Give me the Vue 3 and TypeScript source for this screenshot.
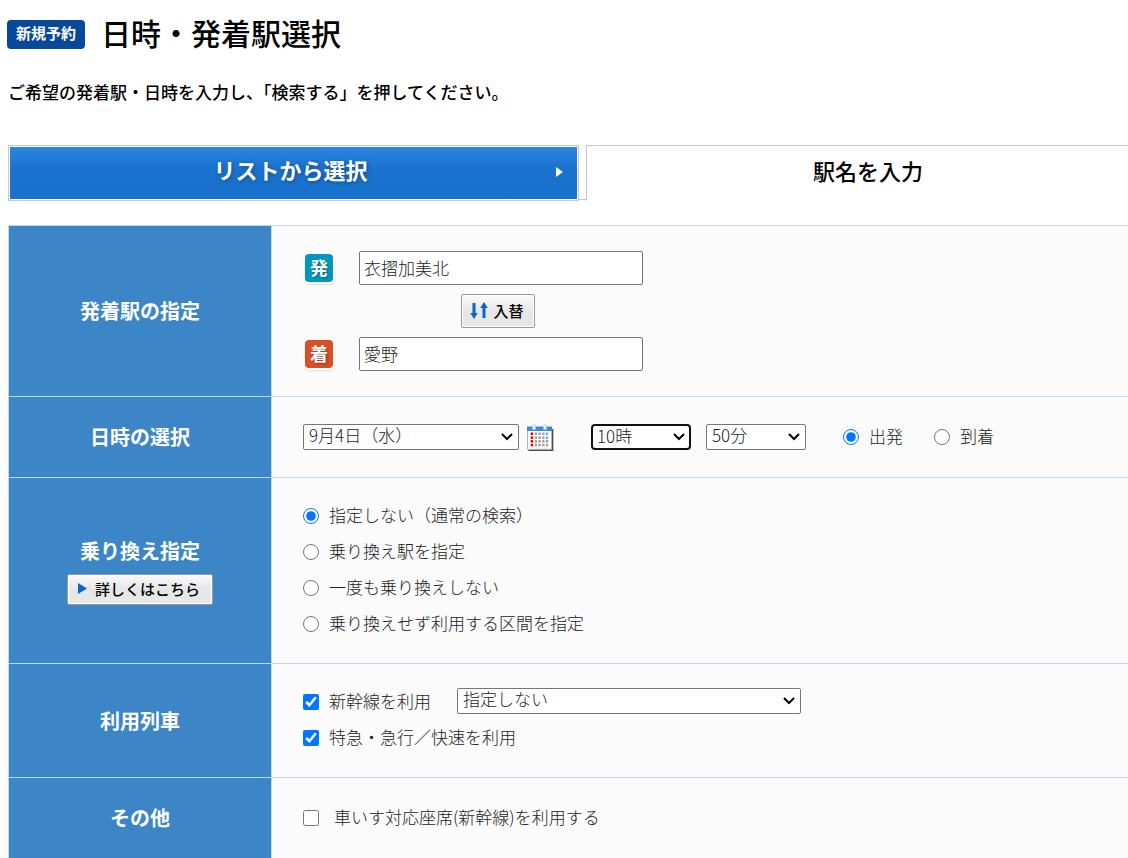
<script setup lang="ts">
import { ref } from 'vue'

interface Choice {
  value: string
  label: string
}

const mode = ref<'list' | 'name'>('list')
const departure = ref('衣摺加美北')
const arrival = ref('愛野')
const date = ref('9月4日（水）')
const hour = ref('10時')
const minute = ref('50分')
const timeBase = ref('departure')
const transfer = ref('none')
const useShinkansen = ref(true)
const useExpress = ref(true)
const shinkansenType = ref('指定しない')
const wheelchair = ref(false)

const dates: string[] = ['9月4日（水）']
const hours: string[] = ['10時']
const minutes: string[] = ['50分']
const shinkansenTypes: string[] = ['指定しない']

const timeBases: Choice[] = [
  { value: 'departure', label: '出発' },
  { value: 'arrival', label: '到着' },
]

const transfers: Choice[] = [
  { value: 'none', label: '指定しない（通常の検索）' },
  { value: 'station', label: '乗り換え駅を指定' },
  { value: 'direct', label: '一度も乗り換えしない' },
  { value: 'section', label: '乗り換えせず利用する区間を指定' },
]

const calendarColumns = [3.7, 7.7, 11.4, 15.1, 18.8]
const calendarRows = [8.5, 12.4, 16.1, 19.8]

function swapStations(): void {
  const previous = departure.value
  departure.value = arrival.value
  arrival.value = previous
}
</script>

<template>
  <main class="page">
    <header class="heading">
      <span class="badge">新規予約</span>
      <h1>日時・発着駅選択</h1>
    </header>
    <p class="lead">ご希望の発着駅・日時を入力し、「検索する」を押してください。</p>

    <form class="content" @submit.prevent>
      <nav class="tabs">
        <div class="tab-cell">
          <button type="button" class="tab tab-active" @click="mode = 'list'">
            リストから選択
            <svg class="tab-arrow" width="7" height="10" viewBox="0 0 7 10" aria-hidden="true">
              <path d="M0 0L7 5L0 10Z" fill="#fff" />
            </svg>
          </button>
        </div>
        <div class="tab-cell tab-cell-second">
          <button type="button" class="tab tab-plain" @click="mode = 'name'">駅名を入力</button>
        </div>
      </nav>

      <div class="sheet">
        <section class="row">
          <h2 class="row-title">発着駅の指定</h2>
          <div class="row-body stations">
            <div class="station">
              <label class="mark mark-dep" for="departure">発</label>
              <input id="departure" v-model="departure" type="text" class="station-input" />
            </div>
            <button type="button" class="small-button swap" @click="swapStations">
              <svg width="18" height="17" viewBox="0 0 18 17" aria-hidden="true">
                <path d="M2.500 1H5.500V11H7.800L4 17L0.200 11H2.500Z" fill="#0a66cc" />
                <path d="M14 0L17.800 6H15.500V16H12.500V6H10.200Z" fill="#0a66cc" />
              </svg>
              入替
            </button>
            <div class="station">
              <label class="mark mark-arr" for="arrival">着</label>
              <input id="arrival" v-model="arrival" type="text" class="station-input" />
            </div>
          </div>
        </section>

        <section class="row">
          <h2 class="row-title">日時の選択</h2>
          <div class="row-body datetime">
            <select v-model="date" class="select date-select" aria-label="日付">
              <option v-for="d in dates" :key="d">{{ d }}</option>
            </select>
            <button type="button" class="calendar" aria-label="カレンダー">
              <svg width="27" height="27" viewBox="0 0 27 27" aria-hidden="true">
                <path d="M1.500 5H26.300V27H1.500Z" fill="#4a4a4a" />
                <path d="M0.500 3.500H24.500V25.300H0.500Z" fill="#fff" stroke="#b5b5b5" />
                <path d="M0 2.500H25V7H0Z" fill="#3f88d4" />
                <path
                  d="M5.500 5.500V1.500Q7 -0.500 8.500 1.500V5.500ZM16.500 5.500V1.500Q18 -0.500 19.500 1.500V5.500Z"
                  fill="#e2f2ff"
                  stroke="#9bcbee"
                  stroke-width="0.700"
                />
                <template v-for="(y, r) in calendarRows" :key="r">
                  <rect
                    v-for="(x, c) in calendarColumns"
                    :key="c"
                    :x="x"
                    :y="y"
                    width="2.400"
                    height="2.500"
                    :fill="c === 0 ? '#d40000' : '#a0a0a0'"
                  />
                </template>
              </svg>
            </button>
            <select v-model="hour" class="select time-select current" aria-label="時">
              <option v-for="h in hours" :key="h">{{ h }}</option>
            </select>
            <select v-model="minute" class="select time-select" aria-label="分">
              <option v-for="m in minutes" :key="m">{{ m }}</option>
            </select>
            <div class="bases">
              <label v-for="b in timeBases" :key="b.value" class="choice">
                <input v-model="timeBase" type="radio" name="base" :value="b.value" />{{ b.label }}
              </label>
            </div>
          </div>
        </section>

        <section class="row">
          <div class="row-title">
            <h2>乗り換え指定</h2>
            <button type="button" class="small-button detail">
              <svg width="9" height="11" viewBox="0 0 9 11" aria-hidden="true">
                <path d="M0 0L9 5.500L0 11Z" fill="#0a66cc" />
              </svg>
              詳しくはこちら
            </button>
          </div>
          <div class="row-body transfer">
            <label v-for="t in transfers" :key="t.value" class="choice">
              <input v-model="transfer" type="radio" name="transfer" :value="t.value" />{{ t.label }}
            </label>
          </div>
        </section>

        <section class="row">
          <h2 class="row-title">利用列車</h2>
          <div class="row-body trains">
            <div class="train-line">
              <label class="choice"><input v-model="useShinkansen" type="checkbox" />新幹線を利用</label>
              <select v-model="shinkansenType" class="select train-select" aria-label="新幹線の種別">
                <option v-for="s in shinkansenTypes" :key="s">{{ s }}</option>
              </select>
            </div>
            <label class="choice"><input v-model="useExpress" type="checkbox" />特急・急行／快速を利用</label>
          </div>
        </section>

        <section class="row">
          <h2 class="row-title">その他</h2>
          <div class="row-body other">
            <label class="choice choice-wide">
              <input v-model="wheelchair" type="checkbox" />車いす対応座席(新幹線)を利用する
            </label>
          </div>
        </section>
      </div>
    </form>
  </main>
</template>

<style>
body {
  margin: 0;
  background: #fff;
}
</style>

<style scoped>
* {
  box-sizing: border-box;
}

.page {
  padding: 14px 0 0 8px;
  overflow: hidden;
  font-family: "Noto Sans CJK JP", "Noto Sans", sans-serif;
  font-size: 17px;
  font-weight: 300;
  color: #222;
}

button,
input,
select {
  margin: 0;
  font: inherit;
  color: inherit;
}

h1,
h2,
p {
  margin: 0;
}

.heading {
  display: flex;
  align-items: center;
  gap: 16px;
  height: 40px;
  margin-left: -1px;
}

.badge {
  padding: 0 9px 3px;
  border-radius: 4px;
  background: #084898;
  color: #fff;
  font-size: 15px;
  font-weight: 700;
  line-height: 26px;
}

h1 {
  padding-bottom: 4px;
  color: #000;
  font-size: 30px;
  font-weight: 500;
  line-height: 40px;
}

.lead {
  margin-top: 26px;
  color: #000;
  font-weight: 500;
  line-height: 24px;
}

.content {
  margin: 41px -22px 0 0;
}

.tabs {
  display: grid;
  grid-template-columns: 1fr 1fr;
  height: 56px;
}

.tab-cell {
  display: flex;
}

.tab-cell-second {
  padding-left: 7px;
  background: linear-gradient(#c8c8c8, #c8c8c8) 0 54px / 7px 1px no-repeat;
}

.tab {
  flex: 1;
  position: relative;
  padding: 0 0 8px;
  border: 1px solid #c8c8c8;
  font-size: 22px;
  line-height: 32px;
  text-align: center;
}

.tab-active {
  padding-right: 6px;
  background: linear-gradient(#2b87e5, #1a72ce 42%, #1871cd);
  box-shadow: inset 0 0 0 1px #fff;
  color: #fff;
  font-weight: 700;
  text-shadow: 1px 1px 4px rgba(0, 0, 0, 0.35);
}

.tab-arrow {
  position: absolute;
  top: 21px;
  right: 15px;
}

.tab-plain {
  border-bottom: 0;
  background: #fff;
  color: #000;
  font-weight: 500;
}

.sheet {
  margin-top: 24px;
  border: 1px solid #b9dee2;
  border-bottom: 0;
  background: #fbfbfb;
}

.row {
  display: grid;
  grid-template-columns: 263px 1fr;
}

.row + .row {
  border-top: 1px solid #b9dee2;
}

.row-title {
  display: flex;
  flex-direction: column;
  align-items: center;
  justify-content: center;
  gap: 8px;
  border-right: 1px solid #b9dee2;
  background: #3c86c8;
}

h2 {
  color: #fff;
  font-size: 20px;
  font-weight: 700;
  line-height: 30px;
}

.row-body {
  padding: 0 31px;
}

.stations {
  display: flex;
  flex-direction: column;
  gap: 9px;
  padding-top: 25px;
  padding-bottom: 25px;
}

.station {
  display: flex;
  align-items: center;
  gap: 26px;
  padding-left: 2px;
}

.mark {
  width: 28px;
  padding-bottom: 2px;
  border-radius: 4px;
  box-shadow: 1px 1px 0 1px #fff, 1px 2px 2px 1px #ddd;
  color: #fff;
  font-size: 18px;
  font-weight: 700;
  line-height: 26px;
  text-align: center;
  text-shadow: 1px 1px 2px rgba(0, 0, 0, 0.3);
}

.mark-dep {
  background: #0098ba;
}

.mark-arr {
  background: #d84e26;
}

.station-input {
  width: 284px;
  height: 34px;
  padding: 0 4px 2px;
  border: 1px solid #767676;
  border-radius: 2px;
  background: #fff;
}

.small-button {
  display: flex;
  align-items: center;
  justify-content: center;
  padding: 0 2px 2px 0;
  border: 1px solid #999;
  border-radius: 2px;
  background: linear-gradient(#fafafa, #e6e6e6 50%, #e8e8e8);
  box-shadow: inset 0 0 0 1px #fff;
  color: #000;
  font-size: 15px;
  font-weight: 500;
}

.swap {
  gap: 5px;
  width: 74px;
  height: 34px;
  margin-left: 158px;
}

.detail {
  gap: 8px;
  width: 146px;
  height: 31px;
}

.datetime {
  display: flex;
  align-items: center;
  min-height: 80px;
}

.select {
  appearance: none;
  height: 26px;
  padding: 0 24px 4px 5px;
  border: 1px solid #767676;
  border-radius: 2px;
  background: #fff url("data:image/svg+xml,%3Csvg xmlns='http://www.w3.org/2000/svg' width='12' height='8' viewBox='0 0 12 8'%3E%3Cpath d='M1 1L6 6L11 1' fill='none' stroke='%23000' stroke-width='2'/%3E%3C/svg%3E") right 5px center no-repeat;
  line-height: 20px;
}

.date-select {
  width: 216px;
}

.calendar {
  display: flex;
  width: 27px;
  margin: 0 37px 0 8px;
  padding: 0;
  border: 0;
  background: none;
}

.time-select {
  width: 100px;
}

.time-select + .time-select {
  margin-left: 15px;
}

.current {
  border: 2px solid #101010;
  border-radius: 4px;
  padding: 0 23px 4px 4px;
  background-position: right 4px center;
}

.bases {
  display: flex;
  gap: 31px;
  margin-left: 37px;
  padding-bottom: 2px;
}

.choice {
  display: flex;
  align-items: center;
  gap: 10px;
  line-height: 36px;
}

.choice input {
  width: 16px;
  height: 16px;
  margin-top: 2px;
  accent-color: #0075ff;
}

.choice-wide {
  gap: 15px;
}

.transfer {
  padding-top: 19px;
  padding-bottom: 22px;
}

.trains {
  min-height: 113px;
  padding-top: 19px;
}

.train-line {
  display: flex;
  align-items: center;
  gap: 26px;
}

.train-select {
  width: 344px;
}

.other {
  display: flex;
  align-items: center;
  min-height: 80px;
  padding-bottom: 2px;
}
</style>
